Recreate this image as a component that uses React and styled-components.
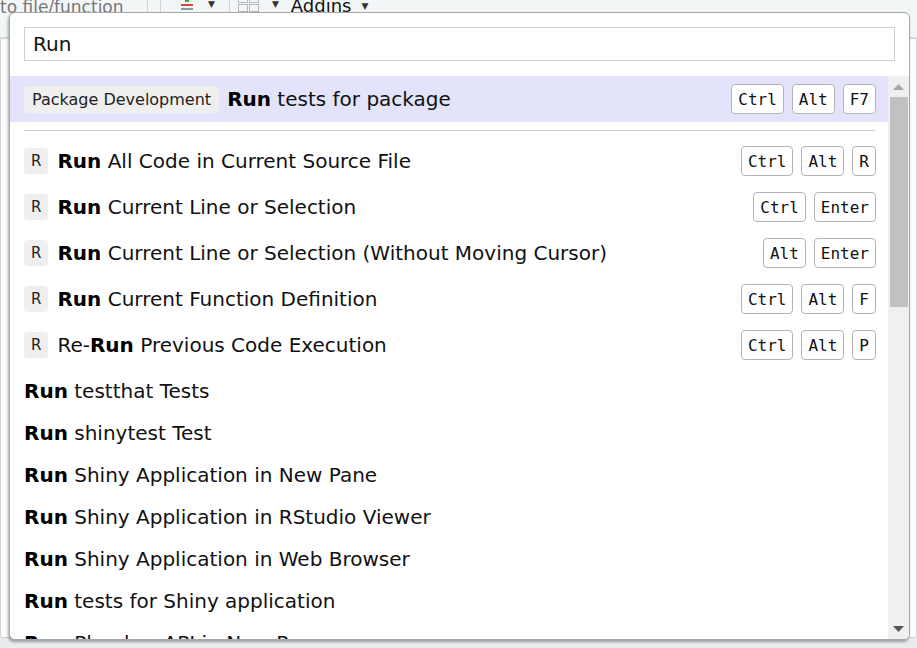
import React from 'react';
import styled, { createGlobalStyle } from 'styled-components';

const GlobalStyle = createGlobalStyle`
  html, body {
    margin: 0;
    padding: 0;
    width: 917px;
    height: 648px;
    overflow: hidden;
    background: #f3f6f7;
    font-family: "DejaVu Sans", "Liberation Sans", sans-serif;
  }
  * { box-sizing: border-box; }
`;

const Ide = styled.div`
  position: relative;
  width: 917px;
  height: 648px;
  display: flex;
  flex-direction: column;
  background: #e9ecee;
`;

const Toolbar = styled.div`
  height: 38px;
  display: flex;
  align-items: flex-start;
  background: #f3f6f7;
  border-bottom: 1px solid #d6dadc;
  color: #333;
`;

const GoTo = styled.div`
  width: 147px;
  margin-top: -3px;
  color: #777;
  font-size: 17px;
  white-space: nowrap;
  overflow: hidden;
`;

const ToolSep = styled.div`
  width: 1px;
  height: 30px;
  background: #d0d4d6;
  margin-right: ${({ gap }) => gap || 12}px;
`;

const ToolItem = styled.div`
  display: flex;
  align-items: center;
  gap: ${({ gap }) => gap || 12}px;
  margin: -5px ${({ after }) => after || 12}px 0 0;
  font-size: 18px;
  color: #111;
`;

const Caret = styled.span`
  font-size: 9px;
  color: #333;
`;

const Workspace = styled.div`
  flex: 1;
  display: flex;
  gap: 6px;
  padding: 0 0 10px 0;
`;

const Pane = styled.div`
  flex: 1;
  background: #fff;
  border: 1px solid #cfd3d5;
  border-radius: 2px;
  font-family: "DejaVu Sans Mono", monospace;
  font-size: 14px;
  color: #222;
  padding: 10px 0 0 6px;
  overflow: hidden;
  white-space: nowrap;
`;

const Palette = styled.div`
  position: absolute;
  top: 12px;
  left: 9px;
  width: 901px;
  height: 628px;
  background: #fff;
  border: 1px solid #a8a8a8;
  border-radius: 6px;
  box-shadow: -1px 2px 3px rgba(0, 0, 0, 0.35);
  display: flex;
  flex-direction: column;
  overflow: hidden;
`;

const SearchWrap = styled.div`
  padding: 14px 14px 15px 14px;
`;

const SearchInput = styled.div`
  height: 34px;
  border: 1px solid #cfcfcf;
  display: flex;
  align-items: center;
  padding-left: 8px;
  font-size: 20px;
  color: #111;
`;

const Body = styled.div`
  flex: 1;
  display: flex;
  min-height: 0;
`;

const List = styled.div`
  flex: 1;
  overflow: hidden;
  display: flex;
  flex-direction: column;
`;

const Row = styled.div`
  flex: none;
  height: ${({ tall }) => (tall ? 46 : 42)}px;
  display: flex;
  align-items: center;
  padding: ${({ tall }) => (tall ? 0 : 4)}px 12px 0 14px;
  background: ${({ selected }) => (selected ? '#e3e3fb' : 'transparent')};
  color: #111;
  font-size: 20px;
  white-space: nowrap;
`;

const Label = styled.div`
  flex: 1;
  display: flex;
  align-items: center;
  gap: ${({ wide }) => (wide ? 8 : 9)}px;
`;

const Bold = styled.b`
  font-weight: bold;
  color: #000;
`;

const Context = styled.span`
  display: inline-flex;
  align-items: center;
  height: ${({ small }) => (small ? 26 : 27)}px;
  padding: 0 ${({ small }) => (small ? 7 : 8)}px;
  background: #efefef;
  border-radius: 4px;
  font-size: ${({ small }) => (small ? 15 : 16)}px;
  color: #222;
`;

const Keys = styled.div`
  display: flex;
  gap: 8px;
`;

const Key = styled.kbd`
  display: inline-flex;
  align-items: center;
  height: 30px;
  padding: 0 6px;
  border: 1px solid #b4b4b4;
  border-radius: 4px;
  background: #fff;
  font-family: "DejaVu Sans Mono", monospace;
  font-size: 16px;
  color: #111;
`;

const Separator = styled.div`
  flex: none;
  height: 1px;
  margin: 8px 13px 7px 14px;
  background: #cccccc;
`;

const ScrollTrack = styled.div`
  width: 21px;
  background: #f0f0f0;
  display: flex;
  flex-direction: column;
  align-items: center;
  padding: 0 1px;
`;

const Arrow = styled.div`
  height: 21px;
  display: flex;
  align-items: center;
  justify-content: center;
`;

const Thumb = styled.div`
  align-self: stretch;
  margin-left: 1px;
  height: 210px;
  background: #c1c1c1;
`;

const Spacer = styled.div`
  flex: 1;
`;

const Triangle = ({ down }) => (
  <svg width="11" height="6" viewBox="0 0 11 6">
    <path d={down ? 'M0 0 L11 0 L5.5 6 Z' : 'M0 6 L11 6 L5.5 0 Z'} fill={down ? '#555' : '#a8a8a8'} />
  </svg>
);

const ChunkIcon = () => (
  <svg width="14" height="18" viewBox="0 0 14 18">
    <rect x="5" y="0" width="4" height="7" fill="#3aa63a" />
    <rect x="2" y="2" width="10" height="3" fill="#3aa63a" />
    <rect x="1" y="9" width="12" height="2" fill="#d9453a" />
    <rect x="1" y="13" width="12" height="2" fill="#8a9aa6" />
  </svg>
);

const GridIcon = () => (
  <svg width="22" height="18" viewBox="0 0 22 18">
    <rect x="0.5" y="0.5" width="9" height="7" fill="none" stroke="#b5bac0" />
    <rect x="11.5" y="0.5" width="9" height="7" fill="none" stroke="#b5bac0" />
    <rect x="0.5" y="9.5" width="9" height="7" fill="none" stroke="#b5bac0" />
    <rect x="11.5" y="9.5" width="9" height="7" fill="none" stroke="#b5bac0" />
  </svg>
);

const commands = [
  { ctx: 'R', pre: '', bold: 'Run', rest: ' All Code in Current Source File', keys: ['Ctrl', 'Alt', 'R'] },
  { ctx: 'R', pre: '', bold: 'Run', rest: ' Current Line or Selection', keys: ['Ctrl', 'Enter'] },
  { ctx: 'R', pre: '', bold: 'Run', rest: ' Current Line or Selection (Without Moving Cursor)', keys: ['Alt', 'Enter'] },
  { ctx: 'R', pre: '', bold: 'Run', rest: ' Current Function Definition', keys: ['Ctrl', 'Alt', 'F'] },
  { ctx: 'R', pre: 'Re-', bold: 'Run', rest: ' Previous Code Execution', keys: ['Ctrl', 'Alt', 'P'] },
  { bold: 'Run', rest: ' testthat Tests' },
  { bold: 'Run', rest: ' shinytest Test' },
  { bold: 'Run', rest: ' Shiny Application in New Pane' },
  { bold: 'Run', rest: ' Shiny Application in RStudio Viewer' },
  { bold: 'Run', rest: ' Shiny Application in Web Browser' },
  { bold: 'Run', rest: ' tests for Shiny application' },
  { bold: 'Run', rest: ' Plumber API in New Pane' },
  { bold: 'Run', rest: ' Plumber API in Web Browser' },
];

const CommandRow = ({ cmd, selected }) => {
  const tall = !!cmd.keys;
  const small = cmd.ctx && cmd.ctx.length === 1;
  return (
    <Row tall={tall} selected={selected}>
      <Label wide={cmd.ctx && !small}>
        {cmd.ctx && <Context small={small}>{cmd.ctx}</Context>}
        <span>
          {cmd.pre}
          <Bold>{cmd.bold}</Bold>
          {cmd.rest}
        </span>
      </Label>
      {cmd.keys && (
        <Keys>
          {cmd.keys.map((k) => (
            <Key key={k}>{k}</Key>
          ))}
        </Keys>
      )}
    </Row>
  );
};

const App = () => (
  <>
    <GlobalStyle />
    <Ide>
      <Toolbar>
        <GoTo>to file/function</GoTo>
        <ToolSep />
        <ToolSep gap={19} />
        <ToolItem gap={14} after={14}>
          <ChunkIcon />
          <Caret>▼</Caret>
        </ToolItem>
        <ToolSep gap={8} />
        <ToolItem gap={12} after={12}>
          <GridIcon />
          <Caret>▼</Caret>
        </ToolItem>
        <ToolItem gap={10}>
          Addins <Caret>▼</Caret>
        </ToolItem>
      </Toolbar>
      <Workspace>
        <Pane />
        <Pane>
          <div style={{ height: 268 }} />
          <div>unr</div>
          <div style={{ height: 180 }} />
          <div>s</div>
          <div style={{ height: 30 }} />
          <div>L</div>
        </Pane>
      </Workspace>

      <Palette>
        <SearchWrap>
          <SearchInput>Run</SearchInput>
        </SearchWrap>
        <Body>
          <List>
            <CommandRow
              selected
              cmd={{ ctx: 'Package Development', bold: 'Run', rest: ' tests for package', keys: ['Ctrl', 'Alt', 'F7'] }}
            />
            <Separator />
            {commands.map((c) => (
              <CommandRow key={c.pre + c.rest} cmd={c} />
            ))}
          </List>
          <ScrollTrack>
            <Arrow>
              <Triangle />
            </Arrow>
            <Thumb />
            <Spacer />
            <Arrow>
              <Triangle down />
            </Arrow>
          </ScrollTrack>
        </Body>
      </Palette>
    </Ide>
  </>
);

export default App;
